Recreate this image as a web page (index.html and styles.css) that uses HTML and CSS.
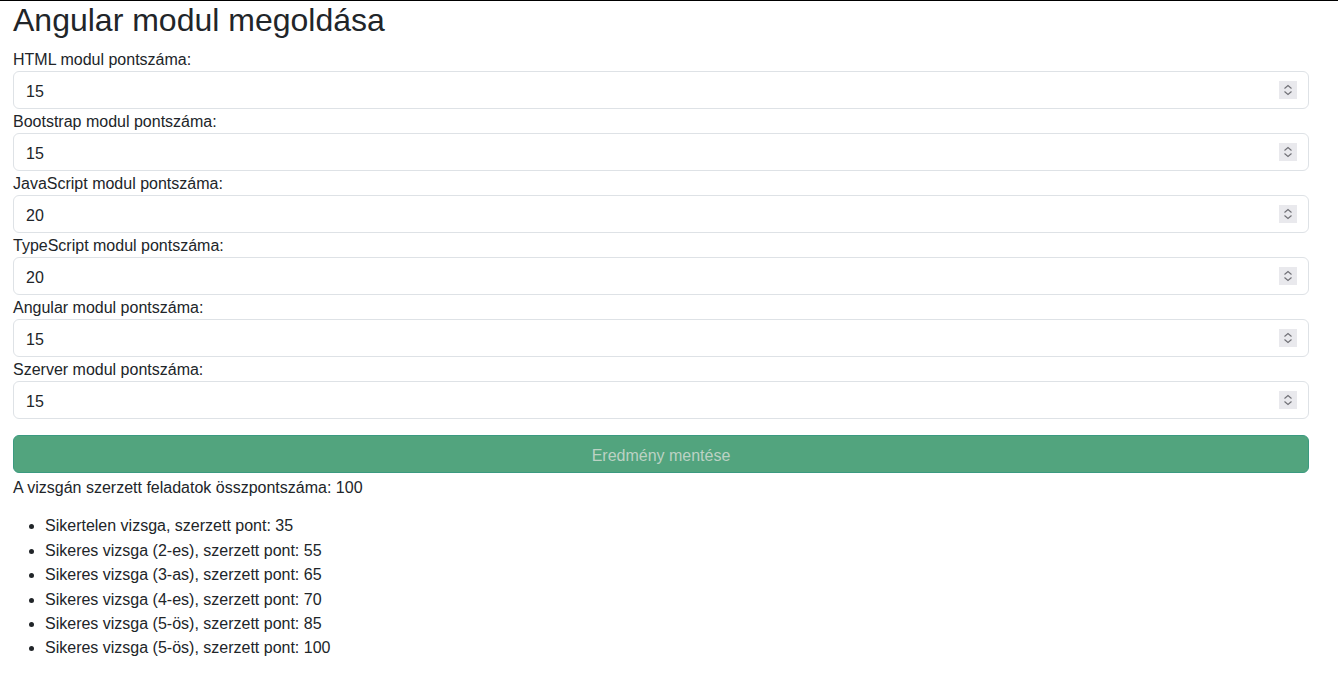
FILE: index.html
```html
<!DOCTYPE html>
<html lang="hu">
<head>
<meta charset="utf-8">
<title>Angular modul megoldása</title>
<link rel="stylesheet" href="styles.css">
</head>
<body>
<div class="page">
  <h2 class="title">Angular modul megoldása</h2>
  <form class="form">
    <label class="label" for="html">HTML modul pontszáma:</label>
    <div class="field"><input class="num" id="html" type="number" value="15"><span class="spin"><svg viewBox="0 0 18 18" width="18" height="18"><path d="M5.5 7.5 9 4.5l3.5 3M5.5 10.5 9 13.5l3.5-3" fill="none" stroke="#6f6f75" stroke-width="1.1"/></svg></span></div>
    <label class="label" for="bs">Bootstrap modul pontszáma:</label>
    <div class="field"><input class="num" id="bs" type="number" value="15"><span class="spin"><svg viewBox="0 0 18 18" width="18" height="18"><path d="M5.5 7.5 9 4.5l3.5 3M5.5 10.5 9 13.5l3.5-3" fill="none" stroke="#6f6f75" stroke-width="1.1"/></svg></span></div>
    <label class="label" for="js">JavaScript modul pontszáma:</label>
    <div class="field"><input class="num" id="js" type="number" value="20"><span class="spin"><svg viewBox="0 0 18 18" width="18" height="18"><path d="M5.5 7.5 9 4.5l3.5 3M5.5 10.5 9 13.5l3.5-3" fill="none" stroke="#6f6f75" stroke-width="1.1"/></svg></span></div>
    <label class="label" for="ts">TypeScript modul pontszáma:</label>
    <div class="field"><input class="num" id="ts" type="number" value="20"><span class="spin"><svg viewBox="0 0 18 18" width="18" height="18"><path d="M5.5 7.5 9 4.5l3.5 3M5.5 10.5 9 13.5l3.5-3" fill="none" stroke="#6f6f75" stroke-width="1.1"/></svg></span></div>
    <label class="label" for="ng">Angular modul pontszáma:</label>
    <div class="field"><input class="num" id="ng" type="number" value="15"><span class="spin"><svg viewBox="0 0 18 18" width="18" height="18"><path d="M5.5 7.5 9 4.5l3.5 3M5.5 10.5 9 13.5l3.5-3" fill="none" stroke="#6f6f75" stroke-width="1.1"/></svg></span></div>
    <label class="label" for="sv">Szerver modul pontszáma:</label>
    <div class="field"><input class="num" id="sv" type="number" value="15"><span class="spin"><svg viewBox="0 0 18 18" width="18" height="18"><path d="M5.5 7.5 9 4.5l3.5 3M5.5 10.5 9 13.5l3.5-3" fill="none" stroke="#6f6f75" stroke-width="1.1"/></svg></span></div>
    <button class="save" type="button" disabled>Eredmény mentése</button>
  </form>
  <p class="total">A vizsgán szerzett feladatok összpontszáma: 100</p>
  <ul class="results">
    <li>Sikertelen vizsga, szerzett pont: 35</li>
    <li>Sikeres vizsga (2-es), szerzett pont: 55</li>
    <li>Sikeres vizsga (3-as), szerzett pont: 65</li>
    <li>Sikeres vizsga (4-es), szerzett pont: 70</li>
    <li>Sikeres vizsga (5-ös), szerzett pont: 85</li>
    <li>Sikeres vizsga (5-ös), szerzett pont: 100</li>
  </ul>
</div>
</body>
</html>
```

FILE: styles.css
```css
* { box-sizing: border-box; }
html, body { margin: 0; padding: 0; background: #fff; }
body {
  border-top: 1px solid #000;
  font-family: "Liberation Sans", Arial, sans-serif;
  font-size: 16px;
  line-height: 1.5;
  color: #212529;
}
.page {
  padding: 0 29px 0 13px;
}
.title {
  margin: 0 0 8px;
  font-size: 32px;
  font-weight: 400;
  line-height: 1.2;
}
.form {
  display: flex;
  flex-direction: column;
}
.label {
  display: block;
  padding-top: 2px;
  line-height: 22px;
}
.field {
  display: flex;
  align-items: center;
  height: 38px;
  border: 1px solid #dee2e6;
  border-radius: 6px;
  background: #fff;
  padding: 0 11px 0 12px;
}
.num {
  flex: 1;
  min-width: 0;
  border: 0;
  outline: 0;
  padding: 4px 0 0;
  font: inherit;
  line-height: 24px;
  color: #212529;
  background: transparent;
  -moz-appearance: textfield;
  appearance: textfield;
}
.num::-webkit-inner-spin-button,
.num::-webkit-outer-spin-button {
  -webkit-appearance: none;
  margin: 0;
}
.spin {
  display: flex;
  width: 18px;
  height: 18px;
  background: #e9e9ed;
}
.save {
  margin-top: 16px;
  height: 38px;
  width: 100%;
  padding: 4px 0 0;
  border: 1px solid #3b9a80;
  border-radius: 6px;
  background: #52a47e;
  color: #bcd2c4;
  font: inherit;
  cursor: default;
}
.total {
  margin: 3px 0 14px;
}
.results {
  margin: 1px 0 0;
  padding-left: 32px;
}
.results li {
  line-height: 24.4px;
}
```
